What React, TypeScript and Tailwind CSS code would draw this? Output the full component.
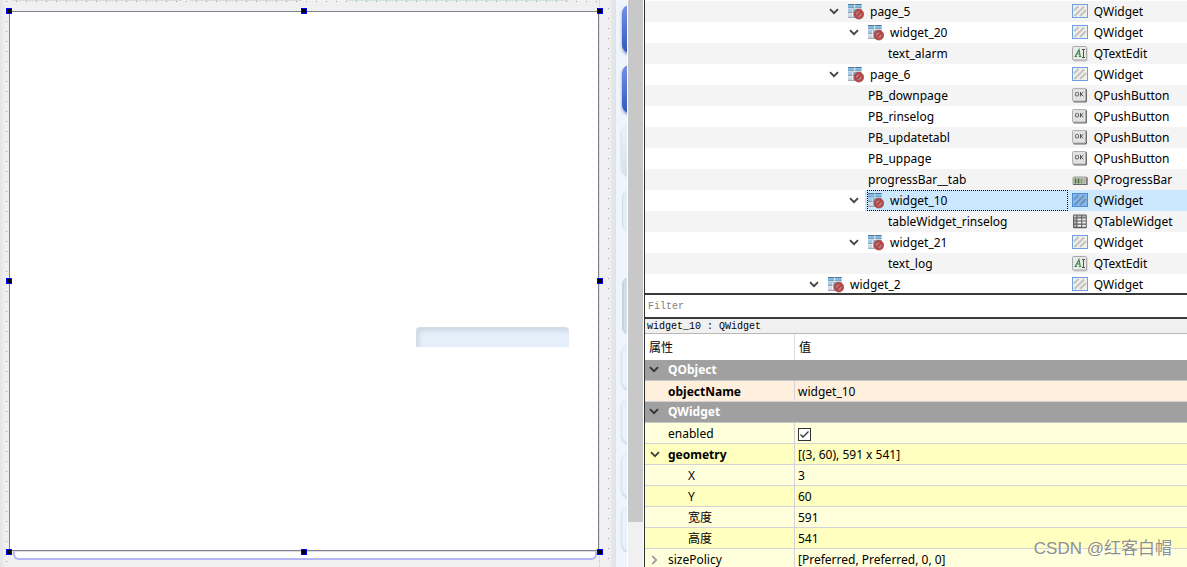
import React, { useState } from "react";

type Kind = "widget" | "textedit" | "button" | "progress" | "table";

type Node = {
  name: string;
  cls: string;
  kind: Kind;
  level: 0 | 1 | 2;
  branch: boolean;
  selected?: boolean;
};

const nodes: Node[] = [
  { name: "page_5", cls: "QWidget", kind: "widget", level: 1, branch: true },
  { name: "widget_20", cls: "QWidget", kind: "widget", level: 2, branch: true },
  { name: "text_alarm", cls: "QTextEdit", kind: "textedit", level: 2, branch: false },
  { name: "page_6", cls: "QWidget", kind: "widget", level: 1, branch: true },
  { name: "PB_downpage", cls: "QPushButton", kind: "button", level: 1, branch: false },
  { name: "PB_rinselog", cls: "QPushButton", kind: "button", level: 1, branch: false },
  { name: "PB_updatetabl", cls: "QPushButton", kind: "button", level: 1, branch: false },
  { name: "PB_uppage", cls: "QPushButton", kind: "button", level: 1, branch: false },
  { name: "progressBar__tab", cls: "QProgressBar", kind: "progress", level: 1, branch: false },
  { name: "widget_10", cls: "QWidget", kind: "widget", level: 2, branch: true, selected: true },
  { name: "tableWidget_rinselog", cls: "QTableWidget", kind: "table", level: 2, branch: false },
  { name: "widget_21", cls: "QWidget", kind: "widget", level: 2, branch: true },
  { name: "text_log", cls: "QTextEdit", kind: "textedit", level: 2, branch: false },
  { name: "widget_2", cls: "QWidget", kind: "widget", level: 0, branch: true },
];

const branchPad = ["pl-[159px]", "pl-[179px]", "pl-[199px]"];
const leafPad = ["pl-[203px]", "pl-[223px]", "pl-[243px]"];

function Chevron({ className = "" }: { className?: string }) {
  return (
    <svg width="10" height="10" viewBox="0 0 10 10" className={className} aria-hidden="true">
      <path d="M1 2.2 L5 6.2 L9 2.2" fill="none" stroke="currentColor" strokeWidth="1.8" />
    </svg>
  );
}

function BrokenLayoutIcon() {
  return (
    <svg width="16" height="16" viewBox="0 0 16 16" className="shrink-0" aria-hidden="true">
      <rect x="0" y="0" width="6.4" height="4" fill="#86bce2" />
      <rect x="7.2" y="0" width="6.4" height="4" fill="#86bce2" />
      <path d="M0 0.5 H6.4 M7.2 0.5 H13.6" stroke="#4f7391" strokeWidth="1" />
      <path d="M0 3.9 H6.4 M7.2 3.9 H13.6" stroke="#66899f" strokeWidth="0.8" />
      <rect x="0" y="5" width="4.4" height="3.6" fill="#a9cbe6" />
      <rect x="5.2" y="5" width="8.4" height="3.6" fill="#8fa9bf" />
      <path d="M0 8.4 H4.4 M5.2 8.4 H9" stroke="#6d8399" strokeWidth="0.8" />
      <rect x="0" y="9.4" width="4.4" height="4" fill="#cfdbe6" />
      <rect x="5.2" y="9.4" width="4" height="4" fill="#b4c3d2" />
      <path d="M0 13.3 H7" stroke="#8592a0" strokeWidth="0.9" />
      <circle cx="10.8" cy="10.2" r="4.9" fill="#c04545" stroke="#8f4a4a" strokeWidth="0.6" />
      <circle cx="10.8" cy="10.2" r="2.7" fill="#a98488" />
      <path d="M8.6 12.4 L13 8" stroke="#b93a3a" strokeWidth="1.7" />
    </svg>
  );
}

function KindIcon({ kind, selected }: { kind: Kind; selected?: boolean }) {
  if (kind === "widget") {
    return (
      <svg width="16" height="16" viewBox="0 0 16 16" className="shrink-0" aria-hidden="true">
        <rect x="0.5" y="0.5" width="15" height="13" fill={selected ? "#8ab8e4" : "#efefed"} stroke={selected ? "#4a8ad4" : "#6f9fdc"} />
        <path
          d="M2 6.5 L6.5 2 M2.5 12 L12 2.5 M8 12 L14 6"
          stroke={selected ? "#6692c0" : "#c2c2c0"}
          strokeWidth="2"
        />
      </svg>
    );
  }
  if (kind === "textedit") {
    return (
      <svg width="16" height="16" viewBox="0 0 16 16" className="shrink-0" aria-hidden="true">
        <rect x="1.5" y="1.5" width="14" height="14" rx="1" fill="#c8c8c8" />
        <rect x="0.5" y="0.5" width="14" height="13.5" rx="1" fill="#e9ebe9" stroke="#a9a9a9" />
        <path d="M3.2 10.5 L7 3.5 L8.2 10.5 M4.8 8 L8 8 M2.4 10.5 L5 10.5 M6.8 10.5 L9.4 10.5" fill="none" stroke="#3c8a45" strokeWidth="1.2" />
        <path d="M11.5 3.5 V11.5 M10 3.5 H13 M10 11.5 H13" stroke="#555" strokeWidth="1" />
      </svg>
    );
  }
  if (kind === "button") {
    return (
      <svg width="16" height="16" viewBox="0 0 16 16" className="shrink-0" aria-hidden="true">
        <rect x="1" y="0.5" width="14" height="14" rx="1.5" fill="#6f6f6f" />
        <rect x="0.5" y="0.5" width="13" height="12.5" rx="1" fill="#e2e2e2" stroke="#b0b0b0" />
        <rect x="3.5" y="4.5" width="3" height="3.4" rx="1" fill="none" stroke="#555" strokeWidth="1" />
        <path d="M8.5 4 V8.4 M11.3 4.2 L9 6.2 L11.3 8.2" fill="none" stroke="#555" strokeWidth="1" />
      </svg>
    );
  }
  if (kind === "progress") {
    return (
      <svg width="16" height="16" viewBox="0 0 16 16" className="shrink-0" aria-hidden="true">
        <rect x="1" y="5" width="14" height="7.5" rx="1" fill="#c9ccc4" stroke="#9a9d96" />
        <path d="M1 12.5 H15.5 M15 5.5 V13" stroke="#666" strokeWidth="1.2" />
        <path d="M3.5 6.5 V11.5 M6.5 6.5 V11.5" stroke="#4d7335" strokeWidth="1.8" />
        <path d="M9.5 6.5 V11.5" stroke="#7d9070" strokeWidth="1.8" />
        <path d="M12.5 6.5 V11.5" stroke="#a4aa9e" strokeWidth="1.8" />
      </svg>
    );
  }
  return (
    <svg width="16" height="16" viewBox="0 0 16 16" className="shrink-0" aria-hidden="true">
      <rect x="1" y="0.5" width="13.8" height="13.8" rx="1" fill="#5c5c5c" />
      <rect x="2" y="1.5" width="2.4" height="2" fill="#c8c8c8" />
      <rect x="5.4" y="1.5" width="3.8" height="2" fill="#b4b4b4" />
      <rect x="10.2" y="1.5" width="3.6" height="2" fill="#b4b4b4" />
      <path d="M2 5.5 H4.4 M2 8.5 H4.4 M2 11.7 H4.4" stroke="#b4b4b4" strokeWidth="2" />
      <path d="M5.4 5.5 H9.2 M5.4 8.5 H9.2 M5.4 11.7 H9.2 M10.2 5.5 H13.8 M10.2 8.5 H13.8 M10.2 11.7 H13.8" stroke="#f0f0f0" strokeWidth="2" />
    </svg>
  );
}

function ObjectTree() {
  return (
    <div className="h-[295px] shrink-0 overflow-hidden border-b-2 border-[#3a3a3a] pt-px">
      <table className="w-full table-fixed border-separate border-spacing-0">
        <colgroup>
          <col className="w-[78%]" />
          <col />
        </colgroup>
        <tbody>
          {nodes.map((n, i) => (
            <tr key={n.name} className={i % 2 === 0 ? "bg-[#f4f4f4]" : "bg-white"}>
              <td className="p-0">
                {n.branch ? (
                  <div className={`flex h-[21px] items-stretch ${branchPad[n.level]}`}>
                    <button type="button" aria-label={`Collapse ${n.name}`} className="flex w-5 items-center justify-center text-[#404040]">
                      <Chevron />
                    </button>
                    <div className={`ml-px flex min-w-0 flex-1 pl-0.5 ${n.selected ? "bg-[#cce8ff]" : ""}`}>
                      <div className={`flex min-w-0 flex-1 items-center gap-1.5 border border-dotted ${n.selected ? "border-black" : "border-transparent"}`}>
                        <BrokenLayoutIcon />
                        <span>{n.name}</span>
                      </div>
                    </div>
                  </div>
                ) : (
                  <div className={`flex h-[21px] items-center ${leafPad[n.level]}`}>{n.name}</div>
                )}
              </td>
              <td className={n.selected ? "bg-[#cce8ff] p-0" : "p-0"}>
                <div className="flex h-[21px] items-center gap-1.5 pl-1">
                  <KindIcon kind={n.kind} selected={n.selected} />
                  <span>{n.cls}</span>
                </div>
              </td>
            </tr>
          ))}
        </tbody>
      </table>
    </div>
  );
}

function Group({ title }: { title: string }) {
  return (
    <tr className="h-[21px] bg-[#a0a0a0] font-bold text-white">
      <th colSpan={2} className="border-b border-[#c8c8c8] p-0 text-left">
        <div className="flex h-5 items-center">
          <button type="button" aria-label={`Collapse ${title}`} className="mr-1.5 flex w-[17px] items-center justify-center text-[#333]">
            <Chevron />
          </button>
          {title}
        </div>
      </th>
    </tr>
  );
}

type RowProps = {
  name: React.ReactNode;
  bg: string;
  bold?: boolean;
  indent?: boolean;
  arrow?: "open" | "closed";
  children: React.ReactNode;
};

function Row({ name, bg, bold, indent, arrow, children }: RowProps) {
  return (
    <tr className={bg}>
      <td className="border-r border-b border-[#d4d4d8] p-0">
        <div className={`flex h-5 items-center pt-0.5 ${bold ? "font-bold" : ""}`}>
          <span className="mr-1 flex w-[19px] items-center justify-center">
            {arrow === "open" && (
              <button type="button" aria-label="Collapse" className="text-[#404040]">
                <Chevron />
              </button>
            )}
            {arrow === "closed" && (
              <button type="button" aria-label="Expand" className="text-[#a0a0a0]">
                <Chevron className="-rotate-90" />
              </button>
            )}
          </span>
          <span className={indent ? "pl-5" : ""}>{name}</span>
        </div>
      </td>
      <td className="border-b border-[#d4d4d8] p-0">
        <div className="flex h-5 items-center pt-0.5 pl-[3px]">{children}</div>
      </td>
    </tr>
  );
}

function PropertyEditor() {
  const [enabled, setEnabled] = useState(true);
  const light = "bg-[#ffffdc]";
  const deep = "bg-[#ffffbf]";
  return (
    <table className="w-full table-fixed border-separate border-spacing-0">
      <colgroup>
        <col className="w-[150px]" />
        <col />
      </colgroup>
      <thead>
        <tr className="h-[26px] bg-white text-left">
          <th className="border-r border-[#e0e0e0] p-0 pt-0.5 pl-1 font-normal">属性</th>
          <th className="p-0 pt-0.5 pl-1 font-normal">值</th>
        </tr>
      </thead>
      <tbody>
        <Group title="QObject" />
        <Row name="objectName" bg="bg-[#fff0de]" bold>widget_10</Row>
        <Group title="QWidget" />
        <Row name={<label htmlFor="enabled">enabled</label>} bg={light}>
          <span className="relative flex">
            <input
              id="enabled"
              type="checkbox"
              checked={enabled}
              onChange={(e) => setEnabled(e.target.checked)}
              className="peer size-[13px] appearance-none border border-[#333] bg-white"
            />
            <svg viewBox="0 0 13 13" className="pointer-events-none absolute inset-0 hidden size-[13px] peer-checked:block" aria-hidden="true">
              <path d="M2.5 6.5 L5 9 L10.5 3.5" fill="none" stroke="#333" strokeWidth="1.3" />
            </svg>
          </span>
        </Row>
        <Row name="geometry" bg={deep} bold arrow="open">[(3, 60), 591 x 541]</Row>
        <Row name="X" bg={light} indent>3</Row>
        <Row name="Y" bg={deep} indent>60</Row>
        <Row name="宽度" bg={light} indent>591</Row>
        <Row name="高度" bg={deep} indent>541</Row>
        <Row name="sizePolicy" bg={light} arrow="closed">[Preferred, Preferred, 0, 0]</Row>
      </tbody>
    </table>
  );
}

const handles = [
  "-left-1 -top-1",
  "left-1/2 -top-1 -translate-x-1/2",
  "-right-[5px] -top-1",
  "-left-1 top-1/2 -translate-y-1/2",
  "-right-[5px] top-1/2 -translate-y-1/2",
  "-left-1 -bottom-[5px]",
  "left-1/2 -bottom-[5px] -translate-x-1/2",
  "-right-[5px] -bottom-[5px]",
];

function FormCanvas() {
  const dots = "bg-[conic-gradient(from_270deg_at_1px_1px,#a0a0a0_90deg,transparent_0)] bg-size-[10px_10px]";
  return (
    <div className="grid min-w-0 grid-cols-[9px_minmax(0,1fr)_12px_16px] bg-[#f0f0f0]">
      <div className="bg-linear-to-r from-[#e3e5e8] to-[#f0f0f0] to-60%">
        <div className={`h-full bg-position-[6px_1px] ${dots}`} />
      </div>
      <div className="flex min-h-0 flex-col">
        <div className={`flex h-[11px] shrink-0 items-start gap-2 bg-position-[7px_1px] pl-[3px] ${dots}`}>
          <div className="h-px w-[29%] bg-[#d9d9e0]" />
          <div className="h-px w-[19%] bg-[#d9d9e0]" />
          <div className="ml-9 h-px w-[38%] bg-[#d3e3e3]" />
        </div>
        <div className="relative min-h-0 flex-1 border border-[#7f8390] bg-white">
          <div className="absolute top-[58.6%] left-[69%] h-5 w-[26%] rounded-t border-t border-l border-[#d3dde6] bg-[#e5eff9] shadow-[inset_3px_4px_4px_-1px_#cbd8e3]" />
          {handles.map((pos) => (
            <span key={pos} className={`absolute z-10 size-1.5 border border-[#0000ff] bg-black ${pos}`} />
          ))}
        </div>
        <div className="h-4 shrink-0 pr-0.5 pl-1">
          <div className="h-[9px] rounded-b-md border-2 border-t border-[#b4b4f6] border-t-[#dcdce4] bg-white" />
        </div>
      </div>
      <div className={`border-l border-dotted border-[#c4ccd0] bg-position-[8px_8px] ${dots}`} />
      <div className="flex min-h-0 overflow-hidden bg-[#eff5fa]">
        <div className="w-[5px] shrink-0 bg-linear-to-r from-[#e6e9eb] to-[#dde4e9]" />
        <div className="flex flex-1 flex-col overflow-hidden pt-[5px] pl-1.5">
          <div className="h-12 w-10 shrink-0 rounded-lg bg-linear-to-b from-[#7591e6] to-[#3258bd] shadow-[0_2px_3px_#8a9ac8]" />
          <div className="mt-3 h-12 w-10 shrink-0 rounded-lg bg-linear-to-b from-[#7591e6] to-[#3258bd] shadow-[0_2px_3px_#8a9ac8]" />
          <div className="mt-3 h-[50px] w-10 shrink-0 rounded-lg bg-linear-to-b from-[#edf3fb] to-[#d8e0e8] shadow-[0_1px_3px_#b8c2cc]" />
          <div className="mt-4 h-10 w-10 shrink-0 rounded-md border-l border-[#d0dce5] bg-[#e4eef5]" />
          <div className="mt-[47px] h-14 w-10 shrink-0 rounded-md border-l-2 border-[#c6d4df] bg-[#d1dfe9]" />
          {["a", "b", "c", "d"].map((k, i) => (
            <div key={k} className={`h-11 w-10 shrink-0 rounded-lg bg-[#eaf1fb] shadow-[0_1px_3px_#b4bfd0] ${i === 0 ? "mt-[11px]" : "mt-[10px]"}`} />
          ))}
        </div>
      </div>
    </div>
  );
}

export default function App() {
  return (
    <main className="relative grid h-screen grid-cols-[minmax(0,627fr)_17px_minmax(0,543fr)] grid-rows-[minmax(0,1fr)] overflow-hidden bg-white font-['Noto_Sans','Noto_Sans_CJK_SC',sans-serif] text-[12px] leading-4 text-black">
      <FormCanvas />
      <div className="border-x border-x-white bg-[#f0f0f0]">
        <div className="h-[92%] bg-[#c8c8c8]" />
      </div>
      <section className="flex min-w-0 flex-col overflow-hidden border-l border-[#2f2f2f]">
        <ObjectTree />
        <input
          type="text"
          aria-label="Filter"
          placeholder="Filter"
          className="h-6 w-full shrink-0 border-b-2 border-[#3a3a3a] bg-white px-[3px] font-['Liberation_Mono',monospace] text-[10px] outline-none placeholder:text-[#808080]"
        />
        <div className="h-[15px] shrink-0 border-b border-[#b8b8b8] bg-[#f0f0f0] pl-0.5 font-['Liberation_Mono',monospace] text-[10px] leading-4">
          widget_10 : QWidget
        </div>
        <PropertyEditor />
      </section>
      <div className="pointer-events-none absolute right-[15px] bottom-1.5 font-['Liberation_Sans','Noto_Sans_CJK_SC',sans-serif] text-[17px] leading-6 text-[#8f8f84] [text-shadow:1px_1px_0_#ffffff]">
        CSDN @红客白帽
      </div>
    </main>
  );
}
